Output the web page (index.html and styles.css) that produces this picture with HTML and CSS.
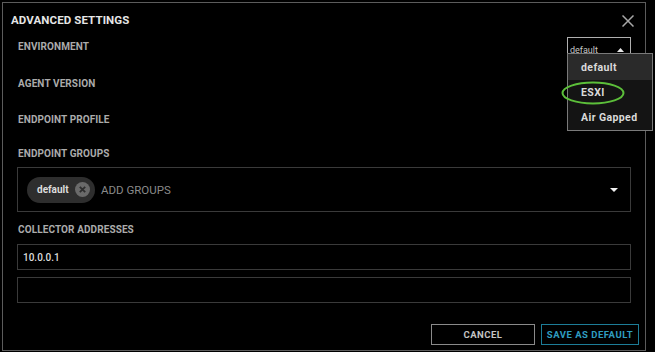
FILE: index.html
```html
<!DOCTYPE html>
<html>
<head>
<meta charset="utf-8">
<link rel="stylesheet" href="styles.css">
</head>
<body>
<div class="dialog">
  <div class="header">
    <div class="title">ADVANCED SETTINGS</div>
    <svg class="close" width="12" height="12" viewBox="0 0 12 12"><path d="M0.5 0.5 L11.5 11.5 M11.5 0.5 L0.5 11.5" stroke="#a8a8a8" stroke-width="1.5" fill="none"/></svg>
  </div>
  <div class="body">
    <div class="env-row">
      <div class="label env-label">ENVIRONMENT</div>
      <div class="select">
        <span>default</span>
        <svg width="7" height="4" viewBox="0 0 7 4"><path d="M0 4 L3.5 0 L7 4 Z" fill="#e8e8e8"/></svg>
      </div>
    </div>
    <div class="label agent">AGENT VERSION</div>
    <div class="label profile">ENDPOINT PROFILE</div>
    <div class="label groups">ENDPOINT GROUPS</div>
    <div class="groupbox">
      <div class="chip">
        <span class="chip-text">default</span>
        <svg class="chip-x" width="15" height="15" viewBox="0 0 15 15"><circle cx="7.5" cy="7.5" r="7.5" fill="#6a6a6a"/><path d="M4.8 4.8 L10.2 10.2 M10.2 4.8 L4.8 10.2" stroke="#2e2e2e" stroke-width="1.8"/></svg>
      </div>
      <span class="placeholder">ADD GROUPS</span>
      <svg class="caret" width="8" height="4" viewBox="0 0 8 4"><path d="M0 0 L8 0 L4 4 Z" fill="#f0f0f0"/></svg>
    </div>
    <div class="label collector">COLLECTOR ADDRESSES</div>
    <div class="input first">10.0.0.1</div>
    <div class="input second"></div>
  </div>
  <div class="footer">
    <button class="btn cancel">CANCEL</button>
    <button class="btn save">SAVE AS DEFAULT</button>
  </div>
  <div class="menu">
    <div class="item active">default</div>
    <div class="item">ESXI</div>
    <div class="item">Air Gapped</div>
  </div>
  <svg class="ring" width="64" height="24" viewBox="0 0 64 24"><ellipse cx="32" cy="12" rx="30.5" ry="10.5" fill="none" stroke="#5cbf3a" stroke-width="2"/></svg>
</div>
</body>
</html>
```
FILE: styles.css
```css
html, body {
  margin: 0;
  padding: 0;
  background: #000;
  font-family: Roboto, "Liberation Sans", sans-serif;
}
.dialog {
  position: relative;
  margin: 2px;
  width: 642px;
  height: 347px;
  border: 1px solid #5c5c5c;
  display: flex;
  flex-direction: column;
}
.header {
  height: 32px;
  padding: 0 11px 0 8px;
  display: flex;
  justify-content: space-between;
  align-items: flex-start;
}
.title {
  margin-top: 11px;
  font-size: 11.5px;
  line-height: 12px;
  font-weight: 700;
  color: #e6e6e6;
  letter-spacing: 0.1px;
}
.close {
  margin-top: 12px;
}
.body {
  padding: 0 14px;
  display: flex;
  flex-direction: column;
}
.label {
  font-size: 10px;
  line-height: 10px;
  font-weight: 700;
  color: #ababab;
  letter-spacing: 0.1px;
  padding-left: 1px;
}
.env-row {
  height: 20px;
  display: flex;
  justify-content: space-between;
  align-items: flex-start;
}
.env-label { margin-top: 7px; }
.select {
  margin-top: 2px;
  width: 64px;
  height: 20px;
  box-sizing: border-box;
  border: 1px solid #b0b0b0;
  padding: 5px 6px 0 2px;
  display: flex;
  justify-content: space-between;
  align-items: center;
  font-size: 9px;
  line-height: 12px;
  color: #c8c8c8;
}
.agent { margin-top: 24px; }
.profile { margin-top: 26px; }
.groups { margin-top: 24px; }
.groupbox {
  margin-top: 8px;
  height: 45px;
  box-sizing: border-box;
  border: 1px solid #3a3a3a;
  display: flex;
  align-items: center;
  padding: 0 12px 0 9px;
}
.chip {
  height: 26px;
  width: 68px;
  box-sizing: border-box;
  border-radius: 13px;
  background: #2e2e2e;
  display: flex;
  align-items: center;
  padding: 0 5px 0 10px;
  justify-content: space-between;
}
.chip-text {
  font-size: 10px;
  font-weight: 700;
  color: #dcdcdc;
}
.placeholder {
  margin-left: 6px;
  font-size: 11.5px;
  color: #8a8a8a;
  flex: 1;
}
.collector { margin-top: 13px; }
.input {
  height: 26px;
  box-sizing: border-box;
  border: 1px solid #3a3a3a;
  padding-left: 5px;
  display: flex;
  align-items: center;
  font-size: 10px;
  font-weight: 500;
  color: #dedede;
}
.input.first { margin-top: 9px; }
.input.second { margin-top: 7px; }
.footer {
  margin-top: 21px;
  padding-right: 6px;
  display: flex;
  justify-content: flex-end;
  gap: 6px;
}
.btn {
  height: 21px;
  box-sizing: border-box;
  background: #000;
  font-family: Roboto, "Liberation Sans", sans-serif;
  font-size: 9.5px;
  font-weight: 700;
  letter-spacing: 0.5px;
  padding: 0;
  display: flex;
  align-items: center;
  justify-content: center;
}
.cancel {
  width: 104px;
  border: 1px solid #8a8a8a;
  color: #c4c4c4;
}
.save {
  width: 98px;
  border: 1px solid #1d7d98;
  color: #2f9dc0;
}
.menu {
  position: absolute;
  left: 564px;
  top: 50px;
  width: 86px;
  height: 78px;
  box-sizing: border-box;
  border: 1px solid #7a7a7a;
  background: #141414;
  display: flex;
  flex-direction: column;
}
.item {
  height: 25px;
  padding-left: 13px;
  display: flex;
  align-items: center;
  font-size: 10.5px;
  font-weight: 700;
  letter-spacing: 0.4px;
  color: #dadada;
}
.item.active {
  height: 26px;
  background: #2a2a2a;
}
.ring {
  position: absolute;
  left: 558px;
  top: 78px;
}
```
